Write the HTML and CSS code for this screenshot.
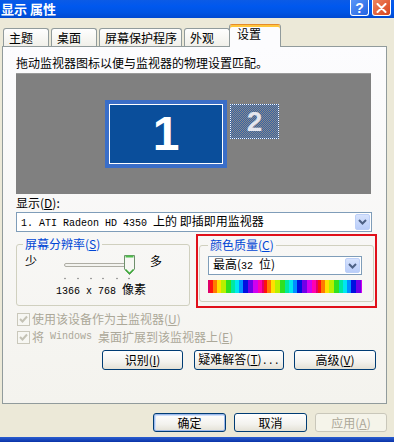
FILE: index.html
```html
<!DOCTYPE html>
<html lang="zh-CN">
<head>
    <meta charset="UTF-8">
    <title>显示 属性</title>
    <link rel="stylesheet" href="styles.css">
</head>
<body>
    <div class="window">
        <div class="titlebar">
            <span class="title">显示 属性</span>
            <div class="caption">
                <span class="cbtn help">?</span>
                <span class="cbtn close">
                    <svg width="11" height="10" viewBox="0 0 11 10"><path d="M1.5 1 L9.5 9 M9.5 1 L1.5 9" stroke="#fff" stroke-width="2" stroke-linecap="round"/></svg>
                </span>
            </div>
        </div>

        <div class="tabs">
            <div class="tab">主题</div>
            <div class="tab">桌面</div>
            <div class="tab">屏幕保护程序</div>
            <div class="tab">外观</div>
            <div class="tab active">设置</div>
        </div>

        <div class="panel">
            <p class="hint">拖动监视器图标以便与监视器的物理设置匹配。</p>

            <div class="monitors">
                <div class="mon mon1"><span>1</span></div>
                <div class="mon mon2"><span>2</span></div>
            </div>

            <div class="label">显示(<u>D</u>):</div>
            <div class="combo wide">
                <span class="combo-text"><span class="mono">1. ATI Radeon HD 4350 </span>上的 即插即用监视器</span>
                <span class="combo-btn"><svg width="11" height="8" viewBox="0 0 11 8"><path d="M2 2 L5.5 5.5 L9 2" fill="none" stroke="#4d6185" stroke-width="2"/></svg></span>
            </div>

            <div class="groups">
                <fieldset class="group res">
                    <legend>屏幕分辨率(<u>S</u>)</legend>
                    <div class="slider-row">
                        <span class="less">少</span>
                        <svg class="slider" width="86" height="27" viewBox="0 0 86 27">
                            <rect x="4.5" y="10.5" width="62" height="3" rx="1.5" fill="#f3f3ef" stroke="#aeada4"/>
                            <path d="M64.5 2.5 H74.5 V16 L69.5 21.5 L64.5 16 Z" fill="#f7f7f4" stroke="#6f8f6c"/>
                            <path d="M65.5 3.5 H73.5" stroke="#4fbd4c" stroke-width="2"/>
                            <path d="M65.5 16.5 L69.5 20.5 L73.5 16.5" fill="none" stroke="#3cae38" stroke-width="1.5"/>
                            <circle cx="5" cy="25.5" r="0.7" fill="#666"/>
                            <circle cx="18" cy="25.5" r="0.7" fill="#666"/>
                            <circle cx="31" cy="25.5" r="0.7" fill="#666"/>
                            <circle cx="43" cy="25.5" r="0.7" fill="#666"/>
                            <circle cx="57" cy="25.5" r="0.7" fill="#666"/>
                            <circle cx="69" cy="25.5" r="0.7" fill="#666"/>
                        </svg>
                        <span class="more">多</span>
                    </div>
                    <div class="res-text"><span class="mono">1366 x 768 </span>像素</div>
                </fieldset>

                <div class="mark">
                    <fieldset class="group color">
                        <legend>颜色质量(<u>C</u>)</legend>
                        <div class="combo small">
                            <span class="combo-text">最高(<span class="mono">32 </span>位)</span>
                            <span class="combo-btn"><svg width="11" height="8" viewBox="0 0 11 8"><path d="M2 2 L5.5 5.5 L9 2" fill="none" stroke="#4d6185" stroke-width="2"/></svg></span>
                        </div>
                        <div class="spectrum"></div>
                    </fieldset>
                </div>
            </div>

            <div class="checks">
                <label class="check"><span class="box"><svg width="9" height="9" viewBox="0 0 9 9"><path d="M1 4 L3.5 6.5 L8 1.5" fill="none" stroke="#c4c2b5" stroke-width="2"/></svg></span>使用该设备作为主监视器(<u>U</u>)</label>
                <label class="check"><span class="box"><svg width="9" height="9" viewBox="0 0 9 9"><path d="M1 4 L3.5 6.5 L8 1.5" fill="none" stroke="#c4c2b5" stroke-width="2"/></svg></span>将<span class="mono">&nbsp;Windows&nbsp;</span>桌面扩展到该监视器上(<u>E</u>)</label>
            </div>

            <div class="actions">
                <button class="btn w81">识别(<u>I</u>)</button>
                <button class="btn w90">疑难解答(<u>T</u>)<span class="mono">...</span></button>
                <button class="btn w82">高级(<u>V</u>)</button>
            </div>
        </div>

        <div class="footer">
            <button class="btn default w73">确定</button>
            <button class="btn w73">取消</button>
            <button class="btn disabled w72">应用(<u>A</u>)</button>
        </div>

        <div class="strip"></div>
    </div>
</body>
</html>
```

FILE: styles.css
```css
* {
    box-sizing: border-box;
}
body {
    margin: 0;
    width: 394px;
    height: 442px;
    overflow: hidden;
    background-color: #ece9d8;
    font-family: "Noto Sans CJK SC", "Liberation Sans", sans-serif;
    font-size: 12px;
    line-height: 14px;
    color: #000;
}
u {
    text-decoration: underline;
}
.mono {
    font-family: "Liberation Mono", monospace;
    font-size: 10px;
}
.window {
    display: flex;
    flex-direction: column;
    height: 442px;
}

/* title bar */
.titlebar {
    height: 18px;
    display: flex;
    justify-content: space-between;
    align-items: flex-start;
    background: linear-gradient(#0b5be6, #0058ee 35%, #0054e3 70%, #0049d0);
}
.title {
    color: #fff;
    font-weight: bold;
    font-size: 13px;
    line-height: 17px;
    margin-left: 1px;
}
.caption {
    display: flex;
    gap: 3px;
    margin-right: 3px;
}
.cbtn {
    width: 19px;
    height: 16px;
    border: 1px solid #fff;
    border-top: none;
    border-radius: 0 0 3px 3px;
    display: flex;
    align-items: center;
    justify-content: center;
    color: #fff;
    font-family: "Liberation Sans", sans-serif;
    font-weight: bold;
    font-size: 14px;
}
.help {
    background: linear-gradient(135deg, #5a97f8, #2463e2);
}
.close {
    background: linear-gradient(135deg, #ef8560, #d8431b);
}

/* tabs */
.tabs {
    height: 28px;
    display: flex;
    align-items: flex-end;
    padding-left: 3px;
    position: relative;
    z-index: 1;
}
.tab {
    height: 18px;
    min-width: 46px;
    padding: 2px 4px 0 5px;
    margin-right: 2px;
    border: 1px solid #919b9c;
    border-bottom: none;
    border-radius: 3px 3px 0 0;
    background: linear-gradient(#fefefe, #f1f0ea);
}
.tab.active {
    height: 23px;
    min-width: 52px;
    padding: 2px 7px 0;
    margin-left: -3px;
    margin-right: 0;
    margin-bottom: -1px;
    border-top: 1px solid #e68b2c;
    box-shadow: inset 0 2px #ffc73c;
    background: #fcfcfe;
}

/* panel */
.panel {
    margin-left: 2px;
    width: 385px;
    height: 358px;
    border: 1px solid #919b9c;
    background: linear-gradient(#fcfcfe, #f4f3ee);
    padding: 9px 0 0 13px;
}
.hint {
    margin: 0;
}
.monitors {
    position: relative;
    margin-top: 3px;
    width: 355px;
    height: 121px;
    background: #808080;
    border-top: 1px solid #9a9a9a;
}
.mon {
    position: absolute;
    display: flex;
    align-items: center;
    justify-content: center;
    font-family: "Liberation Sans", sans-serif;
    font-weight: bold;
}
.mon1 {
    left: 89px;
    top: 26px;
    width: 122px;
    height: 68px;
    background: #0a4e9b;
    border: 4px solid #3a6ec8;
    box-shadow: inset 0 0 0 1px #fff;
    color: #fff;
    font-size: 48px;
}
.mon2 {
    left: 214px;
    top: 30px;
    width: 49px;
    height: 35px;
    border: 1px dotted #fff;
    background: repeating-conic-gradient(#3462a6 0 25%, #8a8a8a 0 50%) 0 0 / 2px 2px;
    color: #e4e6ee;
    font-size: 28px;
}
.label {
    margin-top: 2px;
}
.combo {
    display: flex;
    align-items: center;
    height: 20px;
    padding: 1px;
    border: 1px solid #7f9db9;
    background: #fff;
}
.combo.wide {
    margin-top: 2px;
    width: 356px;
}
.combo.small {
    width: 154px;
    height: 19px;
}
.combo-text {
    flex: 1;
    padding-left: 3px;
    line-height: 16px;
    white-space: nowrap;
}
.combo-btn {
    width: 15px;
    height: 100%;
    display: flex;
    align-items: center;
    justify-content: center;
    border: 1px solid #bdd0f8;
    border-radius: 2px;
    background: linear-gradient(#d7e3fd, #b9cdf9);
}

/* group boxes */
.groups {
    display: flex;
    align-items: flex-start;
    margin-top: 5px;
}
.group {
    margin: 0;
    min-width: 0;
    border: 1px solid #d0d0bf;
    border-radius: 3px;
}
.group legend {
    padding: 0 2px;
    color: #0046d5;
    line-height: 14px;
}
.res {
    width: 174px;
    padding: 2px 6px 6px;
}
.slider-row {
    display: flex;
    align-items: flex-start;
    height: 27px;
}
.less {
    margin: 1px 0 0 2px;
}
.slider {
    margin-left: 23px;
}
.more {
    margin: 1px 0 0 4px;
}
.res-text {
    margin: 2px 0 0 33px;
}
.mark {
    position: relative;
    margin: 1px 0 0 9px;
}
.mark::after {
    content: "";
    position: absolute;
    top: -4px;
    left: -3px;
    right: -3px;
    bottom: -6px;
    border: 2px solid #e0101a;
}
.color {
    width: 175px;
    padding: 4px 10px 8px 8px;
}
.spectrum {
    margin-top: 5px;
    height: 13px;
    width: 154px;
    background: repeating-linear-gradient(90deg,
        #e0006a 0 2px, #ff1010 2px 5px, #ff7a00 5px 9px, #ffe000 9px 13px,
        #b8f000 13px 18px, #30e020 18px 23px, #00e8a0 23px 27px, #00e8f0 27px 31px,
        #0090ff 31px 35px, #0010e0 35px 40px, #7000e8 40px 45px, #d000f0 45px 50px,
        #ff00b0 50px 54px);
}

/* checkboxes */
.checks {
    margin-top: 4px;
}
.check {
    display: flex;
    align-items: center;
    height: 18px;
    color: #aca899;
}
.box {
    width: 13px;
    height: 13px;
    margin: 0 2px 0 1px;
    border: 1px solid #cac8bb;
    background: #f7f7f3;
    display: flex;
    align-items: center;
    justify-content: center;
}

/* buttons */
.actions {
    display: flex;
    justify-content: flex-end;
    margin-top: 4px;
    padding-right: 10px;
    gap: 10px;
}
.btn {
    height: 20px;
    padding: 0;
    border: 1px solid #003c74;
    border-radius: 3px;
    background: linear-gradient(#fff, #f3f2ee 60%, #e4e1d6);
    font-family: inherit;
    font-size: 12px;
    line-height: 14px;
    color: #000;
    white-space: nowrap;
}
.w81 { width: 81px; margin-right: 1px; }
.w90 { width: 90px; }
.w82 { width: 82px; }
.w73 { width: 73px; }
.w72 { width: 72px; }
.footer {
    display: flex;
    justify-content: flex-end;
    gap: 8px;
    margin-top: 9px;
    padding-right: 7px;
}
.footer .btn {
    height: 19px;
}
.btn.default {
    box-shadow: inset 0 0 0 1px #9db9eb, inset 1px 1px 0 1px #cee0fa;
}
.btn.disabled {
    border-color: #c9c7ba;
    background: #f5f4ea;
    color: #aca899;
}
.strip {
    margin-top: auto;
    height: 5px;
    background: linear-gradient(#2a5ed0, #0a33a8);
}
```
